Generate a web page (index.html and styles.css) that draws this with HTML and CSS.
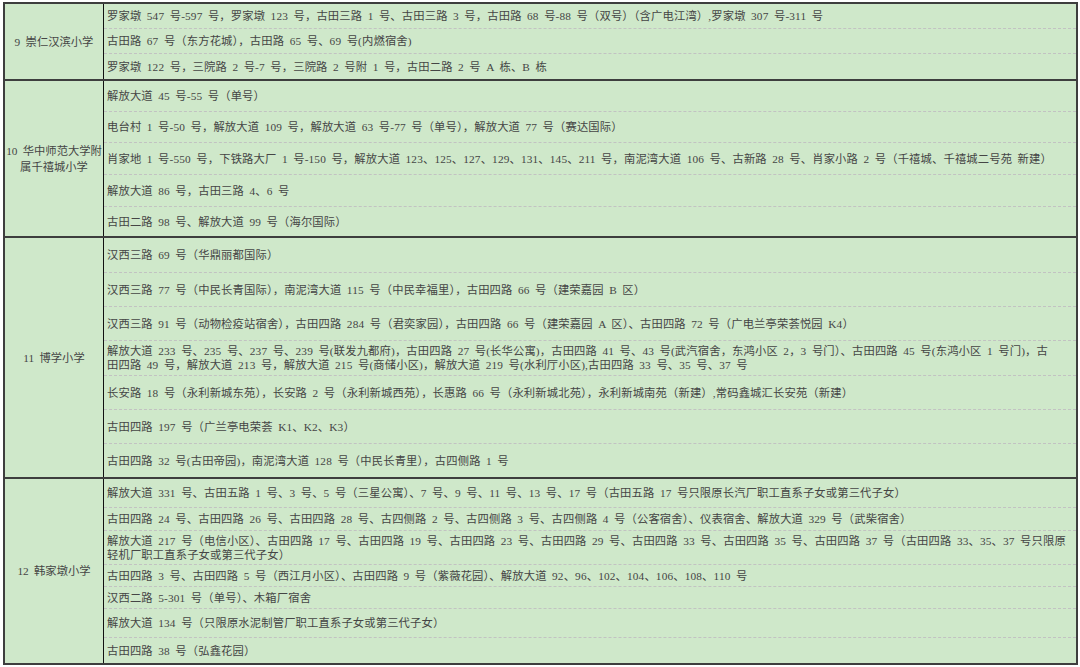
FILE: index.html
```html
<!DOCTYPE html>
<html lang="zh-CN">
<head>
<meta charset="utf-8">
<title>学区划分</title>
<link rel="stylesheet" href="styles.css">
</head>
<body>
<div class="sheet">
  <div class="group">
    <div class="school">9 崇仁汉滨小学</div>
    <div class="areas">
      <div class="line h25">罗家墩 547 号-597 号，罗家墩 123 号，古田三路 1 号、古田三路 3 号，古田路 68 号-88 号（双号）（含广电江湾）,罗家墩 307 号-311 号</div>
      <div class="line h25">古田路 67 号（东方花城），古田路 65 号、69 号(内燃宿舍)</div>
      <div class="line h25">罗家墩 122 号，三院路 2 号-7 号，三院路 2 号附 1 号，古田二路 2 号 A 栋、B 栋</div>
    </div>
  </div>
  <div class="group">
    <div class="school">10 华中师范大学附<br>属千禧城小学</div>
    <div class="areas">
      <div class="line h31">解放大道 45 号-55 号（单号）</div>
      <div class="line h31">电台村 1 号-50 号，解放大道 109 号，解放大道 63 号-77 号（单号），解放大道 77 号（赛达国际）</div>
      <div class="line h32">肖家地 1 号-550 号，下铁路大厂 1 号-150 号，解放大道 123、125、127、129、131、145、211 号，南泥湾大道 106 号、古新路 28 号、肖家小路 2 号（千禧城、千禧城二号苑 新建）</div>
      <div class="line h32">解放大道 86 号，古田三路 4、6 号</div>
      <div class="line h29">古田二路 98 号、解放大道 99 号（海尔国际）</div>
    </div>
  </div>
  <div class="group">
    <div class="school">11 博学小学</div>
    <div class="areas">
      <div class="line h35">汉西三路 69 号（华鼎丽都国际）</div>
      <div class="line h34">汉西三路 77 号（中民长青国际），南泥湾大道 115 号（中民幸福里），古田四路 66 号（建荣嘉园 B 区）</div>
      <div class="line h34">汉西三路 91 号（动物检疫站宿舍），古田四路 284 号（君奕家园），古田四路 66 号（建荣嘉园 A 区）、古田四路 72 号（广电兰亭荣荟悦园 K4）</div>
      <div class="line h35">解放大道 233 号、235 号、237 号、239 号(联发九都府)，古田四路 27 号(长华公寓)，古田四路 41 号、43 号(武汽宿舍，东鸿小区 2，3 号门）、古田四路 45 号(东鸿小区 1 号门)，古<br>田四路 49 号，解放大道 213 号，解放大道 215 号(商储小区)，解放大道 219 号(水利厅小区),古田四路 33 号、35 号、37 号</div>
      <div class="line h34">长安路 18 号（永利新城东苑），长安路 2 号（永利新城西苑），长惠路 66 号（永利新城北苑），永利新城南苑（新建）,常码鑫城汇长安苑（新建）</div>
      <div class="line h34">古田四路 197 号（广兰亭电荣荟 K1、K2、K3）</div>
      <div class="line h33">古田四路 32 号(古田帝园)，南泥湾大道 128 号（中民长青里），古四侧路 1 号</div>
    </div>
  </div>
  <div class="group">
    <div class="school">12 韩家墩小学</div>
    <div class="areas">
      <div class="line h29">解放大道 331 号、古田五路 1 号、3 号、5 号（三星公寓）、7 号、9 号、11 号、13 号、17 号（古田五路 17 号只限原长汽厂职工直系子女或第三代子女）</div>
      <div class="line h23">古田四路 24 号、古田四路 26 号、古田四路 28 号、古四侧路 2 号、古四侧路 3 号、古四侧路 4 号（公客宿舍）、仪表宿舍、解放大道 329 号（武柴宿舍）</div>
      <div class="line h34">解放大道 217 号（电信小区）、古田四路 17 号、古田四路 19 号、古田四路 23 号、古田四路 29 号、古田四路 33 号、古田四路 35 号、古田四路 37 号（古田四路 33、35、37 号只限原<br>轻机厂职工直系子女或第三代子女）</div>
      <div class="line h22">古田四路 3 号、古田四路 5 号（西江月小区）、古田四路 9 号（紫薇花园）、解放大道 92、96、102、104、106、108、110 号</div>
      <div class="line h22">汉西二路 5-301 号（单号）、木箱厂宿舍</div>
      <div class="line h29">解放大道 134 号（只限原水泥制管厂职工直系子女或第三代子女）</div>
      <div class="line h25">古田四路 38 号（弘鑫花园）</div>
    </div>
  </div>
</div>
</body>
</html>
```

FILE: styles.css
```css
html, body {
  margin: 0;
  padding: 0;
  background: #ffffff;
}

.sheet {
  margin: 2px 0 0 3px;
  width: 1075px;
  box-sizing: border-box;
  border: 2px solid #3e3e3e;
  border-bottom: none;
  background: #cfe8ca;
  font-family: "Liberation Serif", "Noto Sans CJK SC", serif;
  font-size: 11.3px;
  word-spacing: 2.5px;
  color: #454545;
}

.group {
  display: grid;
  grid-template-columns: 99px 1fr;
  border-bottom: 2px solid #3e3e3e;
}

.school {
  display: flex;
  align-items: center;
  justify-content: center;
  text-align: center;
  line-height: 16px;
  white-space: nowrap;
  border-right: 1.5px solid #111111;
}

.areas {
  display: flex;
  flex-direction: column;
  min-width: 0;
}

.line {
  display: flex;
  align-items: center;
  box-sizing: border-box;
  padding-left: 3px;
  line-height: 14px;
  letter-spacing: 0.15px;
  white-space: nowrap;
  border-bottom: 1px dashed #c2c2c2;
}

.line:last-child {
  border-bottom: none;
}

.h22 { height: 22px; }
.h23 { height: 23px; }
.h25 { height: 25px; }
.h29 { height: 29px; }
.h31 { height: 31px; }
.h32 { height: 32px; }
.h33 { height: 33px; }
.h34 { height: 34px; }
.h35 { height: 35px; }
.h69 { height: 69px; }
```
